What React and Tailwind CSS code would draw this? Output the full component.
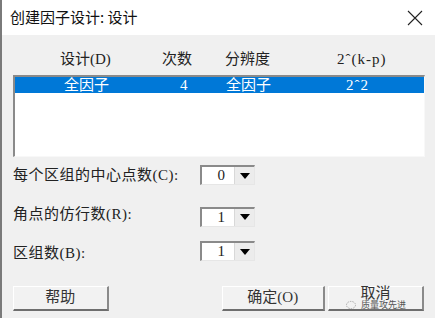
const font = { fontFamily: '"Liberation Serif", "Noto Sans CJK SC", serif' };

function Combo({ value }) {
  return (
    <div className="flex h-[20px] w-[55px] border-t-2 border-l-2 border-t-[#8a8a8a] border-l-[#8a8a8a] border-b border-r border-b-[#e6e6e6] border-r-[#e6e6e6] bg-white">
      <div className="flex flex-1 items-center justify-end pr-[9px] text-[15px] leading-none text-[#222]">
        {value}
      </div>
      <div className="flex w-[20px] items-center justify-center bg-[#ececec] border-l border-[#d8d8d8]">
        <div className="h-0 w-0 border-l-[5px] border-r-[5px] border-t-[6px] border-l-transparent border-r-transparent border-t-black" />
      </div>
    </div>
  );
}

function Button({ children, className = "" }) {
  return (
    <div
      className={`flex h-[25px] items-center justify-center border-t border-l border-t-white border-l-white border-b-2 border-r-2 border-b-[#6e6e6e] border-r-[#8a8a8a] bg-[#f2f2f2] text-[15px] text-[#333] ${className}`}
    >
      {children}
    </div>
  );
}

export default function App() {
  return (
    <div
      className="w-[435px] h-[318px] bg-[#f0f0f0] border-l-2 border-[#7a7a7a] overflow-hidden"
      style={font}
    >
      {/* TITLE BAR */}
      <div className="flex h-[35px] items-center justify-between bg-white pl-[8px] pr-[12px]">
        <span
          className="text-[15px] text-[#111]"
          style={{ fontFamily: '"Noto Sans CJK SC", sans-serif' }}
        >
          创建因子设计: 设计
        </span>
        <svg width="16" height="16" viewBox="0 0 16 16">
          <path d="M1 1 L15 15 M15 1 L1 15" stroke="#222" strokeWidth="1.1" />
        </svg>
      </div>

      <div className="px-[11px]">
        {/* HEADER */}
        <div className="mt-[16px] flex h-[16px] items-center pl-[47px] text-[15px] leading-none text-[#222]">
          <span className="w-[102px]">设计(D)</span>
          <span className="w-[63px]">次数</span>
          <span className="w-[112px]">分辨度</span>
          <span className="tracking-[1px]">2ˆ(k-p)</span>
        </div>

        {/* LIST */}
        <div className="mt-[8px] h-[82px] w-[412px] border-t-2 border-l-2 border-t-[#8a8a8a] border-l-[#8a8a8a] border-b border-r border-b-[#f8f8f8] border-r-[#f8f8f8] bg-white">
          <div className="flex h-[16px] items-center bg-[#0078d7] pl-[49px] text-[15px] leading-none text-white">
            <span className="w-[116px]">全因子</span>
            <span className="w-[46px]">4</span>
            <span className="w-[120px]">全因子</span>
            <span className="tracking-[1px]">2ˆ2</span>
          </div>
        </div>

        {/* OPTIONS */}
        <div className="mt-[7px] flex items-center">
          <span className="w-[187px] text-[15px] tracking-[0.5px] text-[#222]">每个区组的中心点数(C):</span>
          <Combo value="0" />
        </div>
        <div className="mt-[19px] flex items-center">
          <span className="w-[187px] text-[15px] tracking-[0.5px] text-[#222] -translate-y-[3px]">角点的仿行数(R):</span>
          <Combo value="1" />
        </div>
        <div className="mt-[12px] flex items-center">
          <span className="w-[187px] text-[15px] tracking-[0.5px] text-[#222] translate-y-[2px]">区组数(B):</span>
          <Combo value="1" />
        </div>

        {/* BUTTONS */}
        <div className="mt-[23px] flex items-center">
          <Button className="w-[96px]">帮助</Button>
          <Button className="ml-[113px] w-[104px]">确定(O)</Button>
          <div className="relative ml-[3px]">
            <Button className="w-[96px]">
              <span className="leading-none -translate-y-[4px]">取消</span>
            </Button>
            <div className="absolute left-[18px] top-[14px] flex items-center gap-[3px] text-[9px] leading-none text-[#555]">
              <svg width="12" height="10" viewBox="0 0 12 10">
                <ellipse cx="5" cy="5" rx="4.5" ry="3.6" fill="none" stroke="#9a9a9a" strokeWidth="0.8" strokeDasharray="1.5 1" />
              </svg>
              <span style={{ fontFamily: '"Noto Sans CJK SC", sans-serif' }}>质量攻先进</span>
            </div>
          </div>
        </div>
      </div>
    </div>
  );
}
